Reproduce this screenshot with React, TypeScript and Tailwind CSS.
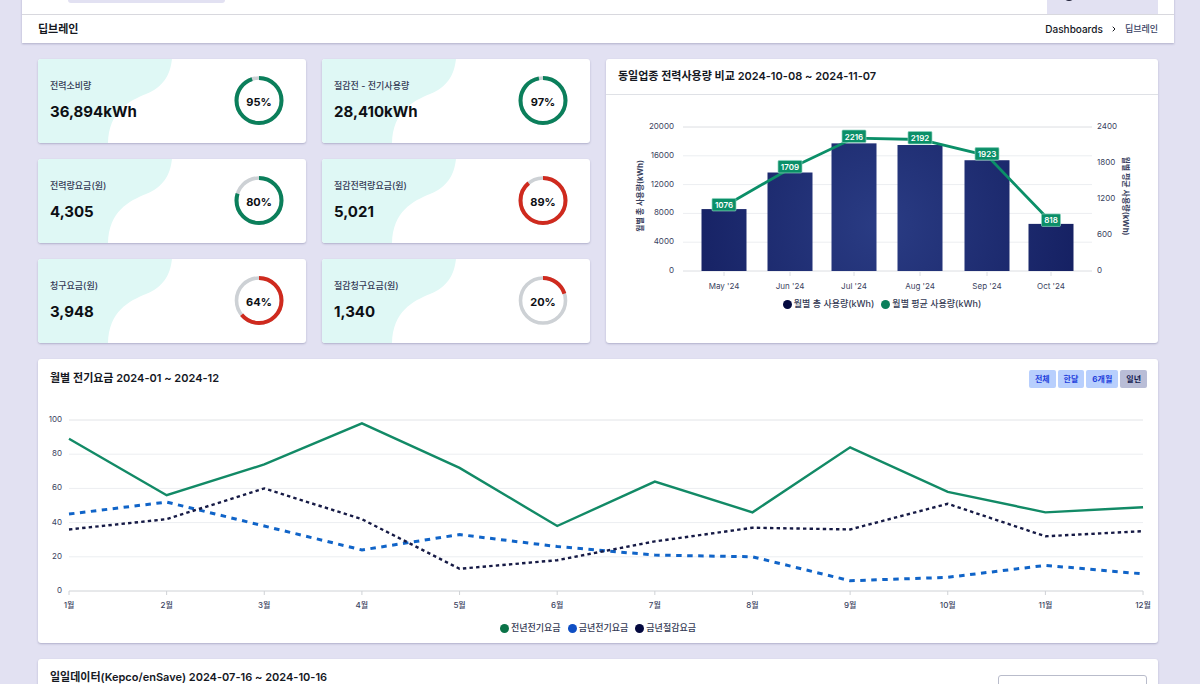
import React from 'react';
import { ChevronRight } from 'lucide-react';

interface Stat {
  label: string;
  value: string;
  percent: number;
  color: string;
}

const GREEN = '#0b7f5b';
const RED = '#cf2a1e';

const STATS: Stat[] = [
  { label: '전력소비량', value: '36,894kWh', percent: 95, color: GREEN },
  { label: '절감전 - 전기사용량', value: '28,410kWh', percent: 97, color: GREEN },
  { label: '전력량요금(원)', value: '4,305', percent: 80, color: GREEN },
  { label: '절감전력량요금(원)', value: '5,021', percent: 89, color: RED },
  { label: '청구요금(원)', value: '3,948', percent: 64, color: RED },
  { label: '절감청구요금(원)', value: '1,340', percent: 20, color: RED },
];

const USAGE = [
  { month: "May '24", x: 118, total: 8600, average: 1076 },
  { month: "Jun '24", x: 184, total: 13680, average: 1709 },
  { month: "Jul '24", x: 248, total: 17728, average: 2216 },
  { month: "Aug '24", x: 314, total: 17500, average: 2192 },
  { month: "Sep '24", x: 381, total: 15384, average: 1923 },
  { month: "Oct '24", x: 445, total: 6544, average: 818 },
];

const LAST_YEAR = [89, 56, 74, 98, 72, 38, 64, 46, 84, 58, 46, 49];
const THIS_YEAR = [45, 52, 38, 24, 33, 26, 21, 20, 6, 8, 15, 10];
const SAVED = [36, 42, 60, 42, 13, 18, 29, 37, 36, 51, 32, 35];

const RANGES = ['전체', '한달', '6개월', '일년'];

const Card: React.FC<{ className?: string; children: React.ReactNode }> = ({ className = '', children }) => (
  <section className={`bg-white rounded-[3px] shadow-[0_1px_2px_rgba(60,60,110,0.3)] ${className}`}>{children}</section>
);

const Ring: React.FC<{ percent: number; color: string }> = ({ percent, color }) => (
  <svg viewBox="0 0 50 50" className="w-[50px] h-[50px] shrink-0">
    <circle cx="25" cy="24.5" r="22.5" fill="none" stroke="#cdd1d5" strokeWidth="3.6" />
    <circle
      cx="25"
      cy="24.5"
      r="22.5"
      fill="none"
      stroke={color}
      strokeWidth="4"
      pathLength="100"
      strokeDasharray={`${percent} 100`}
      transform="rotate(-90 25 24.5)"
    />
    <text x="25" y="30" textAnchor="middle" className="text-[11px] font-bold fill-[#0d0f14]">
      {percent}%
    </text>
  </svg>
);

const StatCard: React.FC<{ stat: Stat }> = ({ stat }) => (
  <Card className="relative overflow-hidden h-[84px]">
    <svg viewBox="0 0 134 84" className="absolute left-0 top-0 h-full w-[134px]">
      <path d="M0 0H134C132 17 125 28 108 35S71 52 70 84H0Z" fill="#dff8f5" />
    </svg>
    <div className="relative h-full flex items-center justify-between pl-3 pr-[22px]">
      <div>
        <p className="text-[9px] leading-4 font-medium text-[#353b55]">{stat.label}</p>
        <p className="mt-[6px] text-[15px] leading-6 font-bold text-[#0d0f14]">{stat.value}</p>
      </div>
      <Ring percent={stat.percent} color={stat.color} />
    </div>
  </Card>
);

const Legend: React.FC<{ items: { label: string; color: string }[] }> = ({ items }) => (
  <ul className="flex justify-center gap-[7px]">
    {items.map((item) => (
      <li key={item.label} className="flex items-center gap-[2px] text-[9px] leading-4 font-medium text-[#353b55]">
        <svg viewBox="0 0 9 9" className="w-[9px] h-[9px]">
          <circle cx="4.5" cy="4.5" r="4.5" fill={item.color} />
        </svg>
        {item.label}
      </li>
    ))}
  </ul>
);

const UsageChart: React.FC = () => {
  const base = 176;
  const height = 144;
  const avgY = (v: number) => base - (v / 2400) * height;
  const barY = (v: number) => base - (v / 20000) * height;

  return (
    <svg viewBox="0 0 552 201" className="w-full block text-[8px] fill-[#3a4260]">
      <defs>
        <radialGradient id="bar" gradientUnits="userSpaceOnUse" cx="275" cy="130" r="205">
          <stop offset="0" stopColor="#2a3c84" />
          <stop offset="1" stopColor="#152062" />
        </radialGradient>
      </defs>

      {[20000, 16000, 12000, 8000, 4000, 0].map((tick) => (
        <g key={tick}>
          <line
            x1="77"
            x2="486"
            y1={barY(tick)}
            y2={barY(tick)}
            stroke={tick === 0 || tick === 20000 ? '#dcdee2' : '#eceef1'}
          />
          <text x="68" y={barY(tick) + 2} textAnchor="end">
            {tick}
          </text>
        </g>
      ))}
      {[2400, 1800, 1200, 600, 0].map((tick) => (
        <text key={tick} x="491" y={avgY(tick) + 2}>
          {tick}
        </text>
      ))}

      {USAGE.map((item) => (
        <g key={item.month}>
          <rect x={item.x - 22.5} y={barY(item.total)} width="45" height={base - barY(item.total)} fill="url(#bar)" />
          <line x1={item.x} x2={item.x} y1={base + 1} y2={base + 5} stroke="#dcdee2" />
          <text x={item.x} y="194" textAnchor="middle">
            {item.month}
          </text>
        </g>
      ))}

      <polyline
        points={USAGE.map((item) => `${item.x},${avgY(item.average)}`).join(' ')}
        fill="none"
        stroke="#0b8f68"
        strokeWidth="2.8"
      />
      {USAGE.map((item) => {
        const width = item.average > 999 ? 24 : 19;
        return (
          <g key={item.month}>
            <rect
              x={item.x - width / 2}
              y={avgY(item.average) - 8}
              width={width}
              height="12.5"
              rx="1"
              fill="#0b8f68"
              stroke="#8fd3bf"
              strokeWidth="0.7"
            />
            <text x={item.x} y={avgY(item.average) + 1.5} textAnchor="middle" className="font-semibold fill-white">
              {item.average}
            </text>
          </g>
        );
      })}

      <text transform="translate(37 101) rotate(-90)" textAnchor="middle" className="font-bold">
        월별 총 사용량(kWh)
      </text>
      <text transform="translate(517 101) rotate(90)" textAnchor="middle" className="font-bold">
        월별 평균 사용량(kWh)
      </text>
    </svg>
  );
};

const MonthlyChart: React.FC = () => {
  const x = (i: number) => 31 + i * 97.64;
  const y = (v: number) => 201 - v * 1.71;
  const points = (values: number[]) => values.map((v, i) => `${x(i)},${y(v)}`).join(' ');

  return (
    <svg viewBox="0 0 1120 221" className="w-full block text-[8px] fill-[#3a4260]">
      {[100, 80, 60, 40, 20, 0].map((tick) => (
        <g key={tick}>
          <line
            x1="31"
            x2="1105"
            y1={y(tick)}
            y2={y(tick)}
            stroke={tick === 0 ? '#cfd2d6' : tick === 100 ? '#e2e4e7' : '#eceef1'}
          />
          <text x="24" y={y(tick) + 2} textAnchor="end">
            {tick}
          </text>
        </g>
      ))}
      {LAST_YEAR.map((_, i) => (
        <g key={i}>
          <line x1={x(i)} x2={x(i)} y1="201" y2="205" stroke="#cfd2d6" />
          <text x={x(i)} y="218" textAnchor="middle" className="font-medium">
            {i + 1}월
          </text>
        </g>
      ))}
      <polyline points={points(LAST_YEAR)} fill="none" stroke="#128a66" strokeWidth="2.4" />
      <polyline points={points(THIS_YEAR)} fill="none" stroke="#1064c8" strokeWidth="3" strokeDasharray="5.5 5.5" />
      <polyline points={points(SAVED)} fill="none" stroke="#161a45" strokeWidth="2.4" strokeDasharray="3.4 3.2" />
    </svg>
  );
};

const App: React.FC = () => {
  return (
    <div className="h-screen overflow-hidden bg-[#e2e1f2] pl-[22px] pr-[26px] font-[Inter,'Noto_Sans_CJK_KR',sans-serif] text-[#15181f]">
      <header className="bg-white shadow-[0_1px_2px_rgba(60,60,110,0.3)]">
        {/* Top bar, scrolled almost out of view */}
        <div className="-mt-8 h-[47px] border-b border-[#d8d8de] flex items-start justify-between pl-[46px] pr-4">
          <input type="search" aria-label="Search" className="mt-2 h-[27px] w-[157px] rounded-[3px] bg-[#e2e1f2]" />
          <div className="h-full w-[111px] bg-[#e2e1f2] pl-4 pt-[21px]">
            <svg viewBox="0 0 12 12" className="w-3 h-3">
              <circle cx="6" cy="6" r="6" fill="#1d1f36" />
            </svg>
          </div>
        </div>
        {/* Title and breadcrumb */}
        <div className="h-[28px] px-4 flex items-center justify-between">
          <h1 className="text-[11px] font-bold">딥브레인</h1>
          <nav className="flex items-center gap-[7px] text-[10px]">
            <a href="#dashboards" className="font-medium">
              Dashboards
            </a>
            <ChevronRight size={8} strokeWidth={3} />
            <span className="text-[9px] font-medium text-[#3a3f63]">딥브레인</span>
          </nav>
        </div>
      </header>

      <main className="px-4 pt-4 flex flex-col gap-4">
        <div className="grid grid-cols-2 gap-4">
          <div className="grid grid-cols-2 gap-4">
            {STATS.map((stat) => (
              <StatCard key={stat.label} stat={stat} />
            ))}
          </div>
          <Card>
            <h2 className="h-9 px-3 flex items-center border-b border-[#dfe1e6] text-[11px] font-semibold">
              동일업종 전력사용량 비교 2024-10-08 ~ 2024-11-07
            </h2>
            <UsageChart />
            <Legend
              items={[
                { label: '월별 총 사용량(kWh)', color: '#04093f' },
                { label: '월별 평균 사용량(kWh)', color: '#0b7f5b' },
              ]}
            />
          </Card>
        </div>

        <Card className="pb-[7px]">
          <div className="h-[31px] pl-3 pr-[11px] pt-[11px] flex items-start justify-between">
            <h2 className="text-[11px] leading-4 font-semibold">월별 전기요금 2024-01 ~ 2024-12</h2>
            <div className="flex gap-[2px]">
              {RANGES.map((range) => (
                <button
                  key={range}
                  className={`h-[18px] px-[6px] rounded-[2px] text-[8px] font-bold ${
                    range === '일년' ? 'bg-[#b9bdd6] text-[#141c50]' : 'bg-[#b8cffd] text-[#2340dc]'
                  }`}
                >
                  {range}
                </button>
              ))}
            </div>
          </div>
          <MonthlyChart />
          <div className="pt-[9px]">
            <Legend
              items={[
                { label: '전년전기요금', color: '#0b7348' },
                { label: '금년전기요금', color: '#0f4fc4' },
                { label: '금년절감요금', color: '#04093f' },
              ]}
            />
          </div>
        </Card>

        <Card className="pl-3 pr-[11px] pt-2 pb-8 flex items-start justify-between">
          <h2 className="text-[11px] leading-5 font-semibold">일일데이터(Kepco/enSave) 2024-07-16 ~ 2024-10-16</h2>
          <input
            type="text"
            aria-label="Search"
            placeholder="Search..."
            className="mt-2 h-6 w-[149px] rounded-[3px] border border-[#b9bccb] px-2 text-[9px]"
          />
        </Card>
      </main>
    </div>
  );
};

export default App;
